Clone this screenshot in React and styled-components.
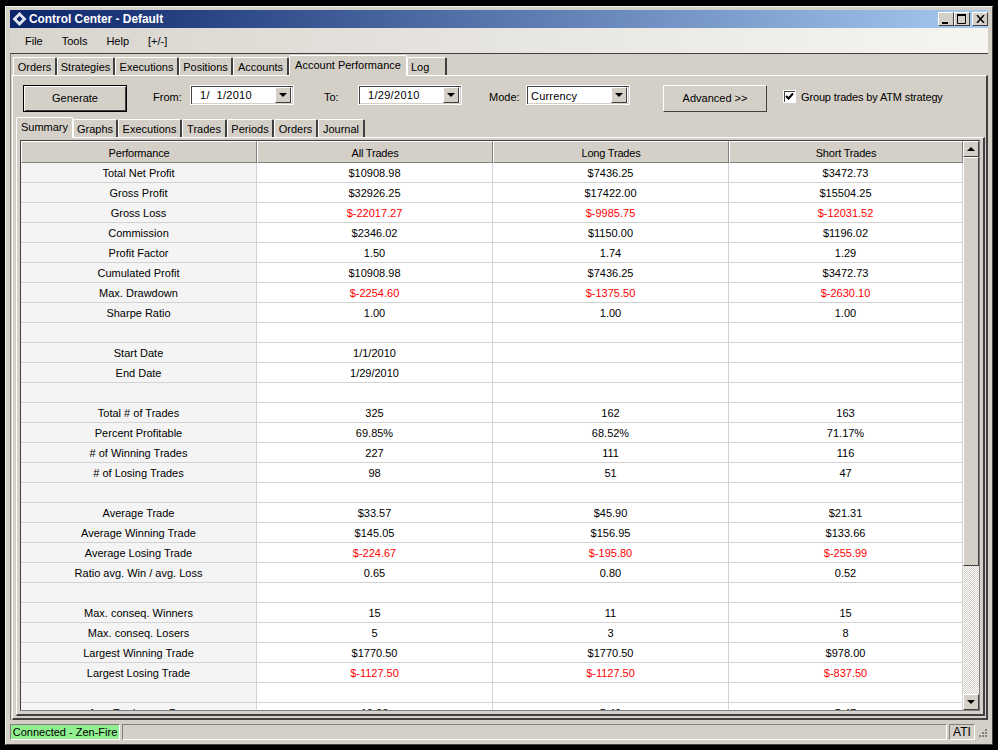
import React from "react";
import styled, { createGlobalStyle } from "styled-components";

const Global = createGlobalStyle`
  html, body { margin: 0; padding: 0; background: #000; }
  body { font-family: "Liberation Sans", Arial, sans-serif; font-size: 11px; color: #000; }
  * { box-sizing: border-box; }
`;
const Page = styled.div`width: 998px; height: 750px; padding: 6px 5px 5px; overflow: hidden;`;
const Win = styled.div`
  width: 988px; height: 739px; background: #d4d0c8; display: flex; flex-direction: column;
  padding: 3px 4px 4px;
  border: 1px solid #f4f3ef; border-right-color: #404040; border-bottom-color: #404040;
`;
const TitleBar = styled.div`
  height: 18px; flex: none; display: flex; align-items: center; padding: 0 0 0 2px; gap: 2px;
  background: linear-gradient(90deg, #0a246a, #a6caf0);
  color: #fff; font-weight: bold; font-size: 11.9px;
`;
const Spacer = styled.div`flex: 1;`;
const CapBtn = styled.div`
  width: 16px; height: 14px; background: #d4d0c8;
  border: 1px solid; border-color: #fff #404040 #404040 #fff;
  display: flex; align-items: center; justify-content: center;
  margin-left: ${p => p.$gap || 0}px;
`;
const CapGroup = styled.div`display: flex;`;
const MenuBar = styled.div`
  height: 25px; flex: none; display: flex; align-items: center; padding: 0 0 0 15px; gap: 19px;
  background: linear-gradient(90deg, #d8d5ce, #f6f5f2);
  font-size: 11px;
`;
const Outer = styled.div`
  flex: 1; min-height: 0; display: flex; flex-direction: column;
  border-top: 1px solid #404040; border-left: 1px solid #808080; padding: 2px 0 0 1px;
`;
const TabRow = styled.div`display: flex; align-items: flex-end; height: 19px; flex: none; padding-left: ${p => p.$pl || 0}px; position: relative; z-index: 1;`;
const Tab = styled.div`
  height: 18px;
  width: ${p => p.$w}px; flex: none;
  background: #d4d0c8;
  border: 1px solid #fff; border-bottom: none; border-right: 2px solid #404040;
  border-radius: 2px 2px 0 0;
  display: flex; align-items: center; justify-content: ${p => p.$left ? "flex-start" : "center"};
  padding-left: ${p => p.$left ? 3 : 0}px;
  font-size: 11px; white-space: nowrap;
  padding-top: 1px;
  ${p => p.$active && `margin-bottom: -1px; border-right: 1px solid #fff; height: 21px; padding-top: 0; padding-bottom: 2px;`}
`;
const Panel = styled.div`
  flex: 1; min-height: 0; display: flex; flex-direction: column; background: #d4d0c8;
  border-top: 1px solid #fff; border-left: 1px solid #fff; border-right: 2px solid #404040; border-bottom: 2px solid #404040;
`;
const InnerPanel = styled(Panel)`margin: 0 1px 2px 3px;`;
const Toolbar = styled.div`height: 42px; flex: none; display: flex; align-items: flex-start; padding-top: 9px; font-size: 11px;`;
const GenBtn = styled.button`
  width: 104px; height: 27px; margin-left: 10px; font: inherit; font-size: 11px; background: #d4d0c8; padding: 0 0 2px;
  border: 1px solid #000; box-shadow: inset 1px 1px 0 #fff, inset -1px -1px 0 #404040;
`;
const AdvBtn = styled(GenBtn)`
  margin-left: 33px; border: 1px solid; border-color: #fff #404040 #404040 #fff;
  box-shadow: none;
`;
const Lbl = styled.span`margin-left: ${p => p.$ml}px; width: ${p => p.$w}px; flex: none; font-size: 11px; line-height: 24px;`;
const Combo = styled.div`
  width: 104px; height: 20px; flex: none; background: #fff;
  border: 1px solid #fff; box-shadow: inset 1px 1px 0 #404040, inset -1px -1px 0 #d4d0c8;
  display: flex; align-items: center; justify-content: space-between; padding: 2px 2px 2px ${p => p.$pl}px;
  font-size: 11px; letter-spacing: ${p => p.$ls}px; white-space: pre;
`;
const ComboText = styled.span`padding-top: ${p => p.$pt || 0}px;`;
const Arrow = styled.div`
  width: 16px; height: 16px; background: #d4d0c8; border: 1px solid; border-color: #fff #404040 #404040 #fff;
  display: flex; align-items: center; justify-content: center;
`;
const Tri = styled.i`
  display: block; width: 0; height: 0; border-left: 4px solid transparent; border-right: 4px solid transparent;
  border-${p => p.$up ? "bottom" : "top"}: 4px solid #000;
`;
const Check = styled.div`
  width: 13px; height: 13px; margin: 5px 0 0 16px; flex: none; background: #fff; border: 1px solid #fff;
  box-shadow: inset 1px 1px 0 #404040; display: flex; align-items: center; justify-content: center;
`;
const CheckLbl = styled.span`margin-left: 5px; font-size: 11px; letter-spacing: -.15px; white-space: nowrap; line-height: 24px;`;
const GridFrame = styled.div`
  flex: 1; min-height: 0; display: flex;
  border: 1px solid #404040; border-right: 1px solid #808080; border-bottom: 1px solid #808080;
  margin: 2px 3px 3px 3px;
`;
const Table = styled.div`flex: 1; min-width: 0; overflow: hidden; background: #fff;`;
const Row = styled.div`display: grid; grid-template-columns: 236px 236px 236px 234px; height: 20px;`;
const HeadCell = styled.div`
  height: 22px; background: #d4d0c8; display: flex; align-items: center; justify-content: center;
  border: 1px solid; border-color: #fff #808080 #808080 #fff; font-size: 11px; letter-spacing: -.2px; padding-top: 1px;
`;
const HeadRow = styled(Row)`height: 22px;`;
const Cell = styled.div`
  background: ${p => p.$label ? "#f4f4f4" : "#fff"};
  color: ${p => p.$neg ? "#f00" : "#000"};
  border-right: 1px solid #d3d3d3; border-bottom: 1px solid #d3d3d3;
  display: flex; align-items: center; justify-content: center; font-size: 11px; padding-top: 1px; white-space: nowrap;
`;
const Scroll = styled.div`width: 16px; flex: none; display: flex; flex-direction: column;
  background-color: #ece9e3;
  background-image: repeating-conic-gradient(#d4d0c8 0 25%, #fff 0 50%);
  background-size: 2px 2px;
`;
const ScrollBtn = styled.div`
  width: 16px; height: 16px; flex: none; background: #d4d0c8; border: 1px solid; border-color: #fff #404040 #404040 #fff;
  display: flex; align-items: center; justify-content: center;
`;
const Thumb = styled.div`
  width: 16px; height: 409px; flex: none; background: #d4d0c8; border: 1px solid; border-color: #fff #404040 #404040 #fff;
`;
const Status = styled.div`height: 20px; flex: none; display: flex; align-items: stretch; gap: 2px; padding: 4px 0 0 0;`;
const StatusCell = styled.div`
  width: ${p => p.$w ? p.$w + "px" : "auto"}; flex: ${p => p.$w ? "none" : 1};
  background: ${p => p.$green ? "#90ee90" : "#d4d0c8"};
  border: 1px solid; border-color: #808080 #fff #fff #808080;
  display: flex; align-items: center; justify-content: center; font-size: ${p => p.$fs || 11}px; white-space: nowrap;
`;
const Grip = styled.div`width: 11px; flex: none;`;

const rows = [
  ["Total Net Profit", "$10908.98", "$7436.25", "$3472.73"],
  ["Gross Profit", "$32926.25", "$17422.00", "$15504.25"],
  ["Gross Loss", "$-22017.27", "$-9985.75", "$-12031.52"],
  ["Commission", "$2346.02", "$1150.00", "$1196.02"],
  ["Profit Factor", "1.50", "1.74", "1.29"],
  ["Cumulated Profit", "$10908.98", "$7436.25", "$3472.73"],
  ["Max. Drawdown", "$-2254.60", "$-1375.50", "$-2630.10"],
  ["Sharpe Ratio", "1.00", "1.00", "1.00"],
  ["", "", "", ""],
  ["Start Date", "1/1/2010", "", ""],
  ["End Date", "1/29/2010", "", ""],
  ["", "", "", ""],
  ["Total # of Trades", "325", "162", "163"],
  ["Percent Profitable", "69.85%", "68.52%", "71.17%"],
  ["# of Winning Trades", "227", "111", "116"],
  ["# of Losing Trades", "98", "51", "47"],
  ["", "", "", ""],
  ["Average Trade", "$33.57", "$45.90", "$21.31"],
  ["Average Winning Trade", "$145.05", "$156.95", "$133.66"],
  ["Average Losing Trade", "$-224.67", "$-195.80", "$-255.99"],
  ["Ratio avg. Win / avg. Loss", "0.65", "0.80", "0.52"],
  ["", "", "", ""],
  ["Max. conseq. Winners", "15", "11", "15"],
  ["Max. conseq. Losers", "5", "3", "8"],
  ["Largest Winning Trade", "$1770.50", "$1770.50", "$978.00"],
  ["Largest Losing Trade", "$-1127.50", "$-1127.50", "$-837.50"],
  ["", "", "", ""],
  ["Avg. Trades per Day", "10.83", "5.40", "5.47"],
];

const Caret = () => <Arrow><Tri /></Arrow>;

export default function App() {
  return (
    <Page>
      <Global />
      <Win>
        <TitleBar>
          <svg width="15" height="14" viewBox="0 0 15 14"><path d="M7.5 0l7 7-7 7-7-7z" fill="#dfe4ee"/><path d="M7.5 4l3 3-3 3-3-3z" fill="#0a246a"/></svg>
          Control Center - Default
          <Spacer />
          <CapGroup>
            <CapBtn><svg width="10" height="10"><rect x="1" y="8" width="6" height="2" /></svg></CapBtn>
            <CapBtn><svg width="10" height="10"><path d="M0.5 1.5h8v8h-8z" fill="none" stroke="#000"/><path d="M0 1h9" stroke="#000" strokeWidth="2"/></svg></CapBtn>
            <CapBtn $gap={2}><svg width="9" height="8"><path d="M1 0l7 8M8 0l-7 8" stroke="#000" strokeWidth="1.5"/></svg></CapBtn>
          </CapGroup>
        </TitleBar>
        <MenuBar><span>File</span><span>Tools</span><span>Help</span><span>[+/-]</span></MenuBar>
        <Outer>
          <TabRow $pl={1}>
            {[["Orders",44],["Strategies",58],["Executions",64],["Positions",54],["Accounts",56]].map(([t,w]) => <Tab key={t} $w={w}>{t}</Tab>)}
            <Tab $active $w={118}>Account Performance</Tab>
            <Tab $w={40} $left>Log</Tab>
          </TabRow>
          <Panel>
            <Toolbar>
              <GenBtn>Generate</GenBtn>
              <Lbl $ml={26} $w={37}>From:</Lbl>
              <Combo $pl={9} $ls={0.3}>{"1/  1/2010"}<Caret /></Combo>
              <Lbl $ml={30} $w={34}>To:</Lbl>
              <Combo $pl={9} $ls={0.3}>1/29/2010<Caret /></Combo>
              <Lbl $ml={27} $w={37}>Mode:</Lbl>
              <Combo $pl={4} $ls={0.2}><ComboText $pt={1}>Currency</ComboText><Caret /></Combo>
              <AdvBtn>Advanced &gt;&gt;</AdvBtn>
              <Check>
                <svg width="9" height="9" viewBox="0 0 9 9"><path d="M1 4l2.5 2.5L8 1.5" fill="none" stroke="#000" strokeWidth="2"/></svg>
              </Check>
              <CheckLbl>Group trades by ATM strategy</CheckLbl>
            </Toolbar>
            <TabRow $pl={3}>
              <Tab $active $w={57}>Summary</Tab>
              {[["Graphs",45],["Executions",64],["Trades",45],["Periods",47],["Orders",44],["Journal",47]].map(([t,w]) => <Tab key={t} $w={w}>{t}</Tab>)}
            </TabRow>
            <InnerPanel>
              <GridFrame>
                <Table>
                  <HeadRow>
                    {["Performance","All Trades","Long Trades","Short Trades"].map(h => <HeadCell key={h}>{h}</HeadCell>)}
                  </HeadRow>
                  {rows.map((r, i) => (
                    <Row key={i}>
                      {r.map((c, j) => <Cell key={j} $label={j === 0} $neg={c.startsWith("$-")}>{c}</Cell>)}
                    </Row>
                  ))}
                </Table>
                <Scroll>
                  <ScrollBtn><Tri $up /></ScrollBtn>
                  <Thumb />
                  <Spacer />
                  <ScrollBtn><Tri /></ScrollBtn>
                </Scroll>
              </GridFrame>
            </InnerPanel>
          </Panel>
        </Outer>
        <Status>
          <StatusCell $green $w={110}>Connected - Zen-Fire</StatusCell>
          <StatusCell />
          <StatusCell $w={26} $fs={12}>ATI</StatusCell>
          <Grip><svg width="11" height="15"><g fill="#808080"><rect x="8" y="5" width="2" height="2"/><rect x="5" y="8" width="2" height="2"/><rect x="8" y="8" width="2" height="2"/><rect x="2" y="11" width="2" height="2"/><rect x="5" y="11" width="2" height="2"/><rect x="8" y="11" width="2" height="2"/></g></svg></Grip>
        </Status>
      </Win>
    </Page>
  );
}
